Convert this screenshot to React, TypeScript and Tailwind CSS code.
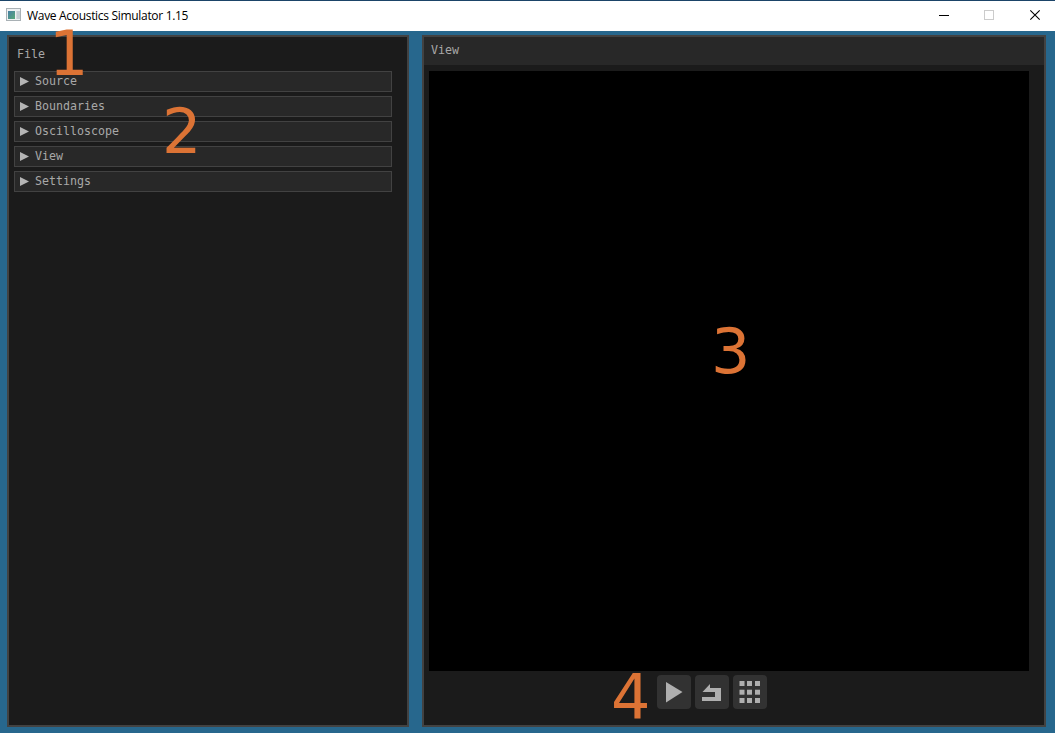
import React from "react";

const sections = ["Source", "Boundaries", "Oscilloscope", "View", "Settings"];

const mono = "font-['DejaVu_Sans_Mono',monospace] text-[11.63px] leading-[14px] text-[#a8a8a8] whitespace-pre";
const digit = "absolute font-['DejaVu_Sans',sans-serif] text-[62px] leading-[62px] text-[#dc7335]";

function TitleBar() {
  return (
    <header className="flex h-[31px] items-center border-t border-[#1b4468] bg-white">
      <svg className="ml-[6px] shrink-0" width="16" height="16" viewBox="0 0 16 16" shapeRendering="crispEdges">
        <defs>
          <linearGradient id="pane" x1="0" y1="0" x2="1" y2="1">
            <stop offset="0" stopColor="#477fa5" />
            <stop offset="1" stopColor="#58a878" />
          </linearGradient>
        </defs>
        <rect x="0" y="0" width="15" height="13" fill="#a9b1b5" />
        <rect x="1" y="1" width="13" height="11" fill="#eef1f3" />
        <rect x="2" y="3" width="7" height="8" fill="url(#pane)" />
        <rect x="10" y="3" width="1" height="8" fill="#d5dadd" />
        <rect x="11" y="3" width="3" height="8" fill="#c3cdd3" />
      </svg>
      <h1 className="ml-[5px] w-[170px] whitespace-nowrap font-['Open_Sans',sans-serif] text-[12px] leading-[16px] tracking-[-0.31px] text-black">
        Wave Acoustics Simulator 1.15
      </h1>
      <svg className="mb-[2px] ml-auto mr-[12px]" width="104" height="12" viewBox="0 0 104 12" fill="none">
        <path d="M0 6.5H10" stroke="#000" />
        <rect x="45.5" y="1.5" width="9" height="9" stroke="#ccc" />
        <path d="M91.3 1.3L100.7 10.7M100.7 1.3L91.3 10.7" stroke="#000" strokeWidth="1.1" />
      </svg>
    </header>
  );
}

function SectionRow({ label }: { label: string }) {
  return (
    <button className="flex h-[21px] w-full items-center border border-[#424242] bg-[#282828] pl-[5px] text-left">
      <svg width="9" height="9" viewBox="0 0 9 9">
        <path d="M0 0L9 4.5L0 9Z" fill="#b4b4b4" />
      </svg>
      <span className={`mb-px ml-[6px] ${mono}`}>{label}</span>
    </button>
  );
}

function ToolButton({ children }: { children: React.ReactNode }) {
  return (
    <button className="size-[34px] rounded-[4px] bg-[#323232]">
      <svg width="34" height="34" viewBox="0 0 34 34" fill="#afafaf">
        {children}
      </svg>
    </button>
  );
}

export default function App() {
  return (
    <div className="relative flex h-[733px] w-[1055px] flex-col overflow-hidden bg-[#27678d]">
      <TitleBar />
      <main className="flex flex-1 gap-[13px] px-[7px] pt-[4px] pb-[6px]">
        <aside className="w-[402px] border-2 border-[#424242] bg-[#1b1b1b] pl-[5px] pr-[15px]">
          <div className={`h-[34px] pl-[3px] pt-[10px] ${mono}`}>File</div>
          <div className="flex flex-col gap-[4px]">
            {sections.map((label) => (
              <SectionRow key={label} label={label} />
            ))}
          </div>
        </aside>
        <section className="flex w-[624px] shrink-0 flex-col border-2 border-[#424242] bg-[#1b1b1b]">
          <div className={`h-[28px] bg-[#282828] pl-[7px] pt-[6px] ${mono}`}>View</div>
          <div className="ml-[5px] mt-[6px] size-[600px] bg-black" />
          <div className="ml-[233px] mt-[4px] flex gap-[4px]">
            <ToolButton>
              <path d="M9 7L25.5 17L9 27.5Z" />
            </ToolButton>
            <ToolButton>
              <path d="M7.5 17L15 9V13H26V26H7V22H20V17Z" />
            </ToolButton>
            <ToolButton>
              {[6.5, 14, 22].map((x) =>
                [6, 14.7, 23].map((y) => <rect key={`${x}-${y}`} x={x} y={y} width="5" height="5" />),
              )}
            </ToolButton>
          </div>
        </section>
      </main>
      <span className={`${digit} left-[49px] top-[23px]`}>1</span>
      <span className={`${digit} left-[162px] top-[101px]`}>2</span>
      <span className={`${digit} left-[711px] top-[321px]`}>3</span>
      <span className={`${digit} left-[611px] top-[667px]`}>4</span>
    </div>
  );
}
